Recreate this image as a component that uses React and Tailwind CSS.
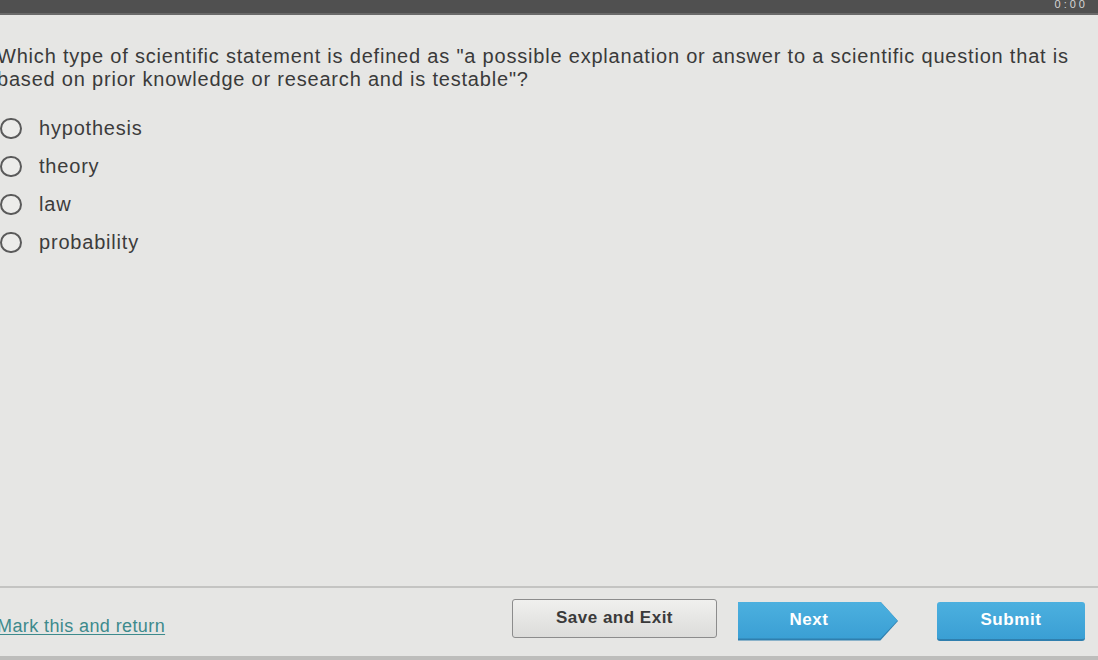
import React from "react";

const options = ["hypothesis", "theory", "law", "probability"];

export default function App() {
  return (
    <div
      className="w-[1098px] h-[660px] overflow-hidden bg-[#e6e6e4] flex flex-col text-[#3a3a3a]"
      style={{ fontFamily: '"Liberation Sans", Arial, sans-serif' }}
    >
      <div className="h-[15px] bg-[#505050] border-b-2 border-[#6a6a6a] flex justify-end items-start">
        <span className="text-[11px] leading-[9px] text-[#d6d6d6] mr-[10px] tracking-[3px]">0:00</span>
      </div>

      <div className="flex-1 flex flex-col pt-[30px]">
        <p className="ml-[-3px] w-[1095px] text-[20px] leading-[23px] tracking-[0.8px]">
          Which type of scientific statement is defined as "a possible explanation or answer to a scientific question that is based on prior knowledge or research and is testable"?
        </p>

        <div className="flex flex-col mt-[18px]">
          {options.map((opt) => (
            <label key={opt} className="flex items-center h-[38px]">
              <span className="w-[22px] h-[21px] rounded-full border-2 border-[#5a5a5a] bg-[#ececea]" />
              <span className="ml-[17px] text-[20px] tracking-[0.8px] text-[#3c3c3c]">{opt}</span>
            </label>
          ))}
        </div>
      </div>

      <div className="h-[70px] border-t-2 border-[#c4c4c2] flex items-center pb-[2px]">
        <a className="flex-1 ml-[-3px] mt-[10px] text-[18px] tracking-[0.4px] text-[#3d8a8c] underline underline-offset-2">
          Mark this and return
        </a>
        <button className="w-[205px] h-[39px] mb-[6px] rounded-[3px] border border-[#8c8c8c] bg-gradient-to-b from-[#f0f0ee] to-[#dcdcda] text-[17px] tracking-[0.5px] font-semibold text-[#3a3a3a]">
          Save and Exit
        </button>
        <div className="ml-[21px] w-[160px] h-[39px] bg-[#2f7fae] [clip-path:polygon(0_0,89%_0,100%_50%,89%_100%,0_100%)] pb-[2px]">
          <button className="w-full h-full bg-gradient-to-b from-[#4cb0df] to-[#3a9fd4] [clip-path:polygon(0_0,89%_0,100%_50%,89%_100%,0_100%)] text-[17px] tracking-[0.5px] font-bold text-white pr-[18px]">
            Next
          </button>
        </div>
        <button className="ml-[39px] mr-[13px] w-[148px] h-[39px] rounded-[3px] border-b-2 border-[#2f7fae] bg-gradient-to-b from-[#4cb0df] to-[#3a9fd4] text-[17px] tracking-[0.6px] font-bold text-white">
          Submit
        </button>
      </div>
      <div className="h-[4px] bg-[#bdbdbb]" />
    </div>
  );
}
